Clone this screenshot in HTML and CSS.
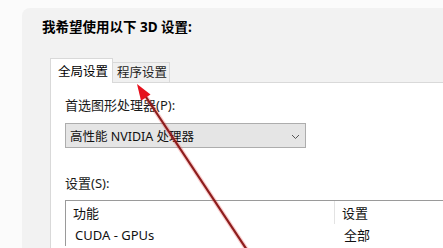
FILE: index.html
```html
<!DOCTYPE html>
<html lang="zh-CN">
<head>
<meta charset="utf-8">
<link rel="stylesheet" href="styles.css">
</head>
<body>
<div class="window">
  <div class="title">我希望使用以下 3D 设置:</div>
  <div class="tabs">
    <div class="tab active">全局设置</div>
    <div class="tab">程序设置</div>
    <div class="tab-fill"></div>
  </div>
  <div class="page">
    <div class="label">首选图形处理器(P):</div>
    <div class="select">
      <span>高性能 NVIDIA 处理器</span>
      <svg class="chev" width="9" height="6" viewBox="0 0 9 6"><path d="M1 1 L4.5 4.5 L8 1" fill="none" stroke="#555" stroke-width="1"/></svg>
    </div>
    <div class="label label-settings">设置(S):</div>
    <div class="list">
      <div class="row head">
        <div class="cell c1">功能</div>
        <div class="cell c2">设置</div>
      </div>
      <div class="row item">
        <div class="cell c1">CUDA - GPUs</div>
        <div class="cell c2">全部</div>
      </div>
    </div>
  </div>
</div>
<svg class="arrow" width="443" height="248" viewBox="0 0 443 248">
  <line x1="247" y1="250" x2="144" y2="94" stroke="rgba(230,60,60,0.25)" stroke-width="4.5"/>
  <line x1="247" y1="250" x2="144" y2="94" stroke="#8e1d1d" stroke-width="2.2"/>
  <polygon points="137,84 150.5,94.5 141,100.8" fill="#e6101c"/>
</svg>
</body>
</html>
```
FILE: styles.css
```css
html, body {
  margin: 0;
  padding: 0;
}
body {
  width: 443px;
  height: 248px;
  overflow: hidden;
  background: #fbfbfb;
  font-family: "Noto Sans", "Noto Sans CJK SC", sans-serif;
  font-size: 13px;
  color: #111;
  position: relative;
}
.window {
  margin: 8px 0 0 22px;
  height: 240px;
  box-sizing: border-box;
  background: #f2f2f2;
  border-top-left-radius: 8px;
  padding: 10px 0 0 20px;
  display: flex;
  flex-direction: column;
}
.title {
  font-weight: bold;
  font-size: 13.5px;
  line-height: 18px;
  color: #000;
}
.tabs {
  margin: 22px 0 0 8px;
  display: flex;
  align-items: flex-end;
  height: 25px;
}
.tab {
  box-sizing: border-box;
  font-size: 12.5px;
  line-height: 18px;
  border: 1px solid #d9d9d9;
}
.tab.active {
  height: 25px;
  width: 63px;
  padding: 4px 0 0 7px;
  background: #fff;
  border-bottom: none;
  color: #000;
}
.tab:not(.active) {
  height: 21px;
  width: 57px;
  padding: 1px 0 0 4px;
  border-left: none;
  background: #f0f0f0;
  color: #222;
}
.tab-fill {
  flex: 1;
  border-bottom: 1px solid #d9d9d9;
}
.page {
  margin-left: 8px;
  flex: 1;
  background: #fff;
  border-left: 1px solid #d9d9d9;
  padding: 13px 0 0 14px;
}
.label {
  line-height: 18px;
  color: #1a1a1a;
}
.select {
  margin-top: 9px;
  width: 241px;
  height: 25px;
  box-sizing: border-box;
  background: #e5e5e5;
  border: 1px solid #adadad;
  display: flex;
  align-items: center;
  justify-content: space-between;
  padding: 0 5px 0 4px;
  color: #111;
  font-size: 12.5px;
}
.chev {
  display: block;
  margin-top: 2px;
}
.label-settings {
  margin-top: 26px;
}
.list {
  margin-top: 8px;
  border-top: 1px solid #9a9a9a;
  border-left: 1px solid #9a9a9a;
}
.row {
  display: flex;
}
.row.head {
  height: 23px;
  align-items: center;
}
.row.item {
  height: 22px;
  align-items: center;
}
.cell {
  line-height: 18px;
}
.c1 {
  width: 261px;
  padding-left: 7px;
}
.head .c2 {
  border-left: 1px solid #e3e3e3;
  padding-left: 7px;
  align-self: stretch;
  display: flex;
  align-items: center;
}
.item .c1 {
  padding-left: 9px;
  width: 259px;
}
.item .c2 {
  padding-left: 10px;
}
.arrow {
  position: absolute;
  top: 0;
  left: 0;
}
```
